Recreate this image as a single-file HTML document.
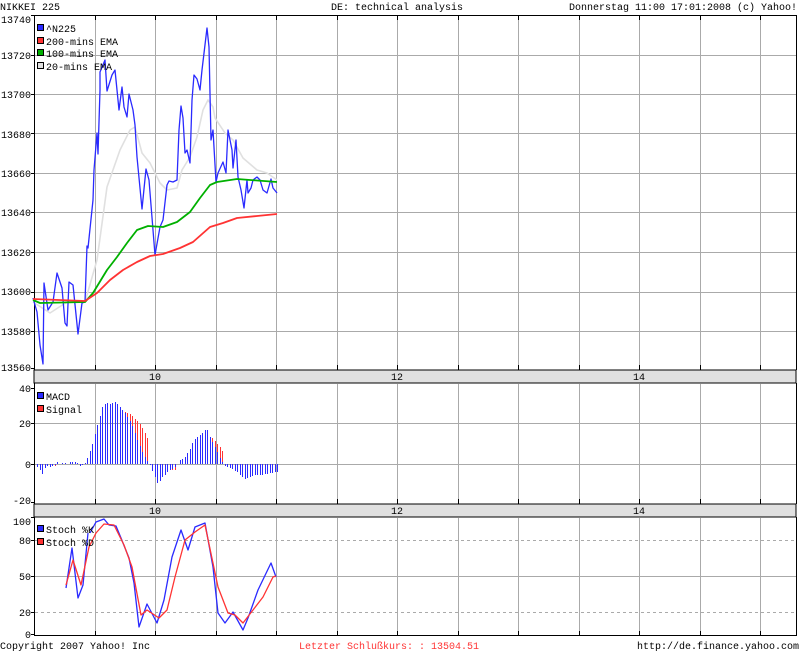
<!DOCTYPE html>
<html><head><meta charset="utf-8"><style>
html,body{margin:0;padding:0;background:#fff;width:800px;height:651px;overflow:hidden}
svg{display:block}
text{font-family:"Liberation Mono","DejaVu Sans Mono",monospace;font-size:10px;fill:#000}
</style></head><body>
<svg id="s" width="800" height="651" xmlns="http://www.w3.org/2000/svg" shape-rendering="crispEdges">
<text x="0" y="10">NIKKEI 225</text>
<text x="331" y="10">DE: technical analysis</text>
<text x="797" y="10" text-anchor="end">Donnerstag 11:00 17:01:2008 (c) Yahoo!</text>

<!-- bands -->
<rect x="34" y="370" width="762" height="13" fill="#e0e0e0" stroke="#000"/>
<rect x="34" y="504" width="762" height="13" fill="#e0e0e0" stroke="#000"/>
<text x="155" y="380" text-anchor="middle">10</text><text x="397" y="380" text-anchor="middle">12</text><text x="639" y="380" text-anchor="middle">14</text>
<text x="155" y="514" text-anchor="middle">10</text><text x="397" y="514" text-anchor="middle">12</text><text x="639" y="514" text-anchor="middle">14</text>

<g id="grid" stroke="#aaa" stroke-width="1"></g>

<!-- axes -->
<g stroke="#000" fill="none">
<path d="M34.5 15V370M34.5 383V504M34.5 517V635M34 635.5H797M34 15.5H797M796.5 15V370M796.5 383V504M796.5 517V635"/>
</g>
<g id="ticks" stroke="#000"></g>

<!-- y labels -->
<g text-anchor="end">
<text x="31" y="23">13740</text><text x="31" y="59">13720</text><text x="31" y="98">13700</text><text x="31" y="138">13680</text><text x="31" y="177">13660</text><text x="31" y="216">13640</text><text x="31" y="256">13620</text><text x="31" y="295">13600</text><text x="31" y="335">13580</text><text x="31" y="371">13560</text>
<text x="31" y="392">40</text><text x="31" y="427">20</text><text x="31" y="468">0</text><text x="31" y="504">-20</text>
<text x="31" y="525">100</text><text x="31" y="544">80</text><text x="31" y="580">50</text><text x="31" y="616">20</text><text x="31" y="638">0</text>
</g>

<g id="bars" shape-rendering="crispEdges"></g>

<g fill="none" stroke-width="1.3" shape-rendering="auto" stroke-linejoin="round">
<polyline stroke="#e0e0e0" stroke-width="1.6" points="33,302 50,313 67,302 85,302 97,260 107,187 120,150 130,130 135,127 142,153 150,163 160,183 167,190 177,188 182,170 190,157 197,137 203,110 208,100 213,107 215,118 225,133 233,140 243,158 257,170 267,173 277,180"/>
<polyline stroke="#2a2aff" points="33,298 37,312 40,345 43,364 44,283 48,310 53,302 57,273 62,288 65,323 67,326 69,282 73,285 78,334 82,303 85,302 87,246 88,248 93,200 94,170 97,133 98,154 100,90 100,72 105,60 107,91 112,75 115,70 119,110 122,87 124,107 127,117 129,94 133,110 135,125 137,157 142,209 146,169 149,180 155,255 160,227 163,220 167,185 169,181 173,182 177,180 179,130 181,106 183,118 185,153 187,150 190,163 192,100 194,75 197,79 200,90 202,70 207,28 209,47 211,140 213,130 216,182 218,173 223,162 226,173 228,130 232,150 233,168 236,140 238,177 241,190 244,208 247,180 248,193 251,188 253,180 257,177 260,180 263,190 267,193 271,179 273,188 277,193"/>
<polyline stroke="#00b000" stroke-width="1.8" points="33,300 40,303 85,302 93,293 107,270 117,257 127,243 137,230 148,226 163,227 177,222 190,212 200,198 210,185 217,182 237,179 277,182"/>
<polyline stroke="#ff3333" stroke-width="1.8" points="33,299 85,301 97,293 110,280 123,270 137,262 150,256 163,254 180,248 193,242 210,227 223,223 237,218 257,216 277,214"/>
<polyline stroke="#2a2aff" points="66,588 72,548 78,598 83,585 88,533"/>
<polyline stroke="#2a2aff" points="90,533 96,522 104,519 109,525 116,526 121,538 129,558 134,583 139,627 147,604 157,623 164,600 172,557 181,530 188,550 195,527 205,523 213,567 218,613 225,623 233,612 243,630 248,618 258,590 271,563 276,577"/>
<polyline stroke="#ff3333" points="66,585 73,560 81,585 89,547 96,533 104,524 114,525 124,545 132,567 141,615 147,610 159,618 167,610 175,577 185,540 195,532 205,525 218,587 228,613 235,615 243,623 253,610 263,597 273,577 276,576"/>
</g>

<!-- legends -->
<g stroke="#000" stroke-width="1">
<rect x="37.5" y="24.5" width="6" height="6" fill="#2a2aff"/>
<rect x="37.5" y="37.5" width="6" height="6" fill="#ff3333"/>
<rect x="37.5" y="49.5" width="6" height="6" fill="#00b000"/>
<rect x="37.5" y="62.5" width="6" height="6" fill="#e0e0e0"/>
<rect x="37.5" y="392.5" width="6" height="6" fill="#2a2aff"/>
<rect x="37.5" y="405.5" width="6" height="6" fill="#ff3333"/>
<rect x="37.5" y="525.5" width="6" height="6" fill="#2a2aff"/>
<rect x="37.5" y="538.5" width="6" height="6" fill="#ff3333"/>
</g>
<text x="46" y="32">^N225</text><text x="46" y="45">200-mins EMA</text><text x="46" y="57">100-mins EMA</text><text x="46" y="70">20-mins EMA</text>
<text x="46" y="400">MACD</text><text x="46" y="413">Signal</text>
<text x="46" y="533">Stoch %K</text><text x="46" y="546">Stoch %D</text>

<text x="0" y="649">Copyright 2007 Yahoo! Inc</text>
<text x="299" y="649" style="fill:#ff3333">Letzter Schlußkurs: : 13504.51</text>
<text x="799" y="649" text-anchor="end">http://de.finance.yahoo.com</text>
</svg>
<script>
var NS="http://www.w3.org/2000/svg";
function el(p,t,a){var e=document.createElementNS(NS,t);for(var k in a)e.setAttribute(k,a[k]);p.appendChild(e);return e;}
var g=document.getElementById('grid'),tk=document.getElementById('ticks');
var d="";
var xs=[];for(var i=1;i<13;i++)xs.push(Math.round(34+i*60.5));
xs.forEach(function(x){d+="M"+(x+.5)+" 16V370M"+(x+.5)+" 384V504M"+(x+.5)+" 518V635";});
[55,94,133,173,212,252,292,331].forEach(function(y){d+="M35 "+(y+.5)+"H796";});
d+="M35 423.5H796M35 464.5H796M35 576.5H796";
el(g,'path',{d:d,fill:'none'});
el(g,'path',{d:"M35 540.5H796M35 612.5H796",fill:'none','stroke-dasharray':'3,3'});
var t="";
xs.forEach(function(x){t+="M"+(x+.5)+" 16V20M"+(x+.5)+" 365V370M"+(x+.5)+" 499V504M"+(x+.5)+" 631V635";});
[15,55,94,133,173,212,252,292,331,368,388,423,464,502,517,540,576,612,634].forEach(function(y){t+="M31 "+(y+.5)+"H35";});
el(tk,'path',{d:t,fill:'none'});
function interp(k,x){for(var i=0;i<k.length-2;i+=2){if(x<=k[i+2]){var f=(x-k[i])/(k[i+2]-k[i]);return k[i+1]+f*(k[i+3]-k[i+1]);}}return k[k.length-1];}
var M=[37,467,40,470,42,474,44,468,47,466,50,467,55,465,57,462,60,464,63,462,66,464,70,462,73,462,76,462,79,466,82,465,86,461,88,455,92,444,95,432,99,418,101,408,104,404,107,403,110,404,114,402,117,404,120,408,124,412,128,418,132,426,137,440,141,450,145,458,150,466,153,474,157,483,160,480,163,476,167,472,170,470,173,468,177,464,180,459,183,459,186,455,190,448,193,440,197,437,200,435,204,430,207,430,210,438,213,444,216,450,220,459,223,464,226,467,230,468,233,470,237,472,240,475,244,479,248,477,252,476,256,475,260,475,265,474,270,473,276,472];
var S=[37,464,60,466,70,463,86,463,100,440,110,420,120,410,130,414,140,424,150,444,157,462,165,470,175,470,185,462,195,450,205,440,212,438,220,448,228,460,240,470,276,471];
var b=document.getElementById('bars'),db="",dr="";
for(var x=37;x<=277;x+=2.5){var X=Math.round(x)+.5,m=Math.round(interp(M,x)),s=Math.round(interp(S,x));
db+="M"+X+" 464V"+m;
if((m<464&&s<m)||(m>464&&s>m))dr+="M"+X+" "+m+"V"+s;}
el(b,'path',{d:db,stroke:'#2a2aff',fill:'none'});
el(b,'path',{d:dr,stroke:'#ff3333',fill:'none'});
</script>
</body></html>
